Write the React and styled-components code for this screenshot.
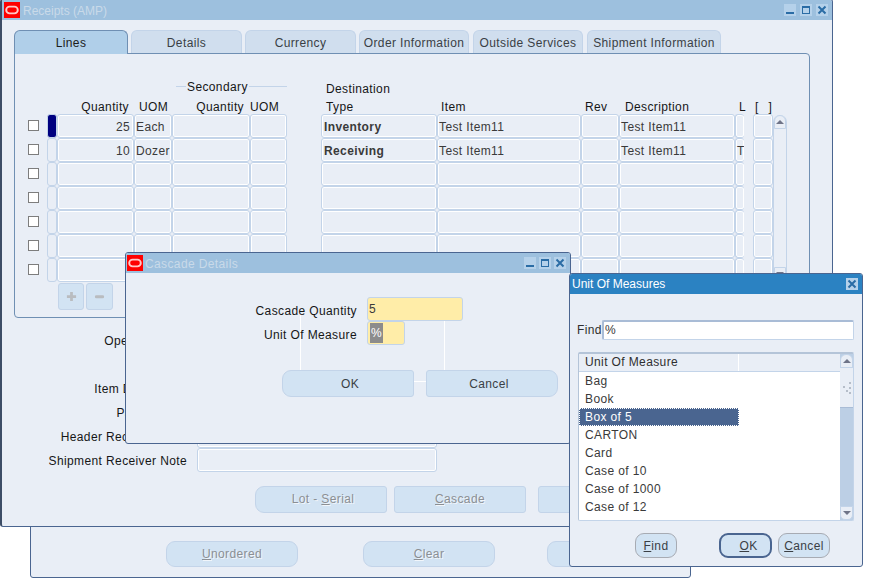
import styled, { createGlobalStyle } from 'styled-components';

const GlobalStyle = createGlobalStyle`
    html, body {
        margin: 0;
        height: 100%;
        background: #ffffff;
        overflow: hidden;
    }
    body {
        font-family: "Liberation Sans", Arial, sans-serif;
        font-size: 12px;
        letter-spacing: 0.38px;
        color: #2f2f2f;
    }
`;

const Desktop = styled.div`
    position: relative;
    width: 869px;
    height: 578px;
    overflow: hidden;
`;

// windows sit on a free canvas, so these are the only placed parts
const Window = styled.section`
    position: absolute;
    left: ${(p) => p.$left}px;
    top: ${(p) => p.$top}px;
    width: ${(p) => p.$width}px;
    height: ${(p) => p.$height}px;
    box-sizing: border-box;
    background: #e9eef6;
    border: 1px solid #4a6590;
    ${(p) => p.$edge && `border-left: ${p.$edge}px solid #3d4d66;`}
    border-radius: 3px;
    display: flex;
    flex-direction: column;
    overflow: hidden;
`;

const TitleBar = styled.header`
    flex: none;
    height: 20px;
    display: flex;
    align-items: center;
    padding: 0 3px 0 ${(p) => p.$left || 2}px;
    background: ${(p) => (p.$active ? '#2b82c2' : '#9dc0de')};
    color: ${(p) => (p.$active ? '#ffffff' : '#c9dae9')};
`;

const TitleText = styled.span`
    flex: 1;
    margin-left: ${(p) => p.$gap || 0}px;
    padding-top: ${(p) => (p.$gap ? 2 : 0)}px;
    letter-spacing: ${(p) => (p.$tight ? '0' : 'inherit')};
    white-space: nowrap;
`;

const LogoBox = styled.svg`
    flex: none;
    width: 16px;
    height: 16px;
    display: block;
`;

const Controls = styled.div`
    display: flex;
    gap: ${(p) => p.$gap || 4}px;
    margin-right: ${(p) => p.$right || 0}px;
`;

const ControlButton = styled.svg`
    display: block;
    width: 12px;
    height: 12px;
    background: #b5d1ea;
`;

const Logo = () => (
    <LogoBox viewBox="0 0 16 16">
        <rect width="16" height="16" fill="#ff0000" />
        <rect x="2.2" y="4.6" width="11.6" height="6.8" rx="3.4" fill="none" stroke="#ffc8c8" strokeWidth="1.9" />
    </LogoBox>
);

const MinIcon = () => (
    <ControlButton viewBox="0 0 12 12">
        <rect x="2" y="8" width="8" height="2" fill="#2a6ca5" />
    </ControlButton>
);

const MaxIcon = () => (
    <ControlButton viewBox="0 0 12 12">
        <rect x="2.5" y="2.5" width="7" height="7" fill="none" stroke="#2a6ca5" />
        <rect x="2" y="2" width="8" height="2" fill="#2a6ca5" />
    </ControlButton>
);

const CloseIcon = () => (
    <ControlButton viewBox="0 0 12 12">
        <path d="M2.5 2.5 L9.5 9.5 M9.5 2.5 L2.5 9.5" stroke="#2a6ca5" strokeWidth="2" />
    </ControlButton>
);

const MainBody = styled.div`
    flex: 1;
    padding: 10px 0 0 12px;
`;

const TabRow = styled.div`
    display: flex;
    height: 23px;
    align-items: flex-start;
`;

const Tab = styled.div`
    box-sizing: border-box;
    flex: none;
    width: ${(p) => p.$width}px;
    margin-left: ${(p) => p.$gap || 0}px;
    height: ${(p) => (p.$active ? 24 : 23)}px;
    display: flex;
    align-items: center;
    justify-content: center;
    padding-top: ${(p) => (p.$active ? 0 : 1)}px;
    border: 1px solid ${(p) => (p.$active ? '#6f8fb3' : '#c3d4e9')};
    border-bottom: none;
    border-radius: 6px 6px 0 0;
    background: ${(p) => (p.$active ? '#b0cfe9' : '#d0deee')};
    color: ${(p) => (p.$active ? '#1c1c1c' : '#3a3f45')};
    white-space: nowrap;
    ${(p) => p.$active && 'position: relative; z-index: 1;'}
`;

const Panel = styled.div`
    box-sizing: border-box;
    width: 796px;
    height: 265px;
    border: 1px solid #6f8fb3;
    border-radius: 0 4px 4px 4px;
    padding: 26px 0 0 13px;
`;

const LinesGrid = styled.div`
    display: grid;
    grid-template-columns: 19px 10px 77px 38px 78px 37px 34px 116px 144px 38px 116px 9px 9px 20px 14px;
    grid-template-rows: 18px 16px repeat(7, 24px);
`;

const HeadLabel = styled.div`
    grid-column: ${(p) => p.$column};
    grid-row: ${(p) => p.$row};
    padding: ${(p) => (p.$right ? `0 ${p.$pad}px 0 0` : `0 0 0 ${p.$pad}px`)};
    text-align: ${(p) => (p.$right ? 'right' : 'left')};
    word-spacing: ${(p) => p.$words || 0}px;
    line-height: 18px;
    color: #161616;
    white-space: nowrap;
`;

const GroupLabel = styled.div`
    grid-column: 5 / 7;
    grid-row: 1;
    display: flex;
    align-items: flex-start;
    gap: 1px;
    padding-left: 4px;
    line-height: 15px;
    color: #161616;
`;

const GroupLine = styled.span`
    flex: ${(p) => (p.$fill ? 1 : 'none')};
    width: 10px;
    height: 1px;
    margin-top: 6px;
    background: #c3d4e9;
`;

const CheckCell = styled.div`
    display: flex;
    align-items: center;
    grid-column: 1;
    grid-row: ${(p) => p.$row};
`;

const CheckBox = styled.span`
    box-sizing: border-box;
    width: 11px;
    height: 11px;
    margin-top: -2px;
    background: #ffffff;
    border: 1px solid #7d7d7d;
`;

const Cell = styled.div`
    grid-column: ${(p) => p.$column};
    grid-row: ${(p) => p.$row};
    box-sizing: border-box;
    height: 24px;
    min-width: 0;
    padding: 0 ${(p) => (p.$right ? 3 : 1)}px 0 ${(p) => (p.$bold ? 2 : 1)}px;
    border: 1px solid #c3d4e9;
    ${(p) => p.$clip && 'border-right: none;'}
    border-radius: 3px;
    box-shadow: inset 0 0 0 1px #ffffff;
    background: #e9eef6;
    line-height: 24px;
    text-align: ${(p) => (p.$right ? 'right' : 'left')};
    font-weight: ${(p) => (p.$bold ? 700 : 400)};
    color: #3a3a3a;
    white-space: nowrap;
    overflow: hidden;
`;

const Indicator = styled.div`
    grid-column: 2;
    grid-row: ${(p) => p.$row};
    box-sizing: border-box;
    height: 24px;
    border: 1px solid #c3d4e9;
    border-radius: 3px;
    background: ${(p) => (p.$current ? '#000080' : '#e9eef6')};
`;

const Scrollbar = styled.div`
    display: flex;
    flex-direction: column;
    justify-content: space-between;
    box-sizing: border-box;
    width: ${(p) => p.$width}px;
    background: ${(p) => p.$track};
    ${(p) => p.$span && 'grid-column: 15; grid-row: 3 / span 7;'}
    ${(p) => p.$span && 'margin-top: 1px; border: 1px solid #c3d4e9; border-top: none; border-radius: 7px 7px 0 0;'}
`;

const ScrollButton = styled.div`
    box-sizing: border-box;
    height: 14px;
    display: flex;
    align-items: center;
    justify-content: center;
    background: #e9eef6;
    border: 1px solid #c3d4e9;
    border-radius: ${(p) => (p.$down ? '0 0 5px 5px' : '6px 6px 0 0')};
`;

const Arrow = styled.span`
    width: 0;
    height: 0;
    border-left: 4px solid transparent;
    border-right: 4px solid transparent;
    ${(p) => (p.$down ? 'border-top' : 'border-bottom')}: 4px solid #6f7488;
`;

const RowTools = styled.div`
    display: flex;
    gap: 2px;
    margin: 1px 0 0 30px;
`;

const ToolButton = styled.button`
    box-sizing: border-box;
    width: ${(p) => p.$width}px;
    height: 27px;
    padding: 0;
    display: flex;
    align-items: center;
    justify-content: center;
    background: #d2e3f3;
    border: 1px solid #c3d4e9;
    border-radius: 3px;
`;

const GrayIcon = styled.svg`
    width: 11px;
    height: 11px;
`;

const FormRows = styled.div`
    margin-top: 10px;
`;

const FormRow = styled.div`
    display: flex;
    height: 24px;
    align-items: center;
`;

const FormLabel = styled.label`
    box-sizing: border-box;
    width: ${(p) => p.$width}px;
    margin-right: 10px;
    padding-top: ${(p) => p.$drop}px;
    text-align: right;
    color: #161616;
    white-space: nowrap;
`;

const FormField = styled.div`
    box-sizing: border-box;
    width: 240px;
    height: 24px;
    border: 1px solid #c3d4e9;
    border-radius: 3px;
    box-shadow: inset 0 0 0 1px #ffffff;
    background: #e9eef6;
`;

const ButtonRow = styled.div`
    display: flex;
    margin: ${(p) => p.$top}px 0 0 ${(p) => p.$left}px;
`;

const ActionButton = styled.button`
    box-sizing: border-box;
    flex: none;
    width: 132px;
    height: ${(p) => p.$height || 27}px;
    margin-left: ${(p) => p.$gap || 0}px;
    padding: 0 ${(p) => p.$padRight || 0}px ${(p) => (p.$disabled ? 1 : 0)}px ${(p) => p.$padLeft || 0}px;
    background: #d2e3f3;
    border: 1px solid #c3d4e9;
    border-radius: ${(p) => p.$radius || '3px'};
    font: inherit;
    letter-spacing: inherit;
    color: ${(p) => (p.$disabled ? '#8b8f94' : '#3a3f45')};
    text-shadow: ${(p) => (p.$disabled ? '1px 1px 0 #f1f6fb' : 'none')};
`;

const DialogBody = styled.div`
    position: relative;
    z-index: 0;
    flex: 1;
    padding-top: 24px;
`;

const DialogField = styled.div`
    box-sizing: border-box;
    width: ${(p) => p.$width}px;
    height: 24px;
    padding-left: 1px;
    background: #ffeda8;
    border: 1px solid #c3d4e9;
    border-radius: 3px;
    line-height: 22px;
    color: #3a3a3a;
`;

const Selected = styled.span`
    display: inline-block;
    height: 20px;
    margin: 1px 0 0 1px;
    padding: 0 1px;
    vertical-align: top;
    line-height: 20px;
    background: #8c8c8c;
    color: #ffffff;
`;

// stray repaint lines left over in the dialog, behind its text
const Trace = styled.span`
    position: absolute;
    z-index: -1;
    left: ${(p) => p.$left}px;
    top: ${(p) => p.$top}px;
    width: ${(p) => p.$width}px;
    height: ${(p) => p.$height}px;
    background: #ffffff;
`;

const FindRow = styled.div`
    display: flex;
    align-items: center;
    margin: 26px 0 0 7px;
`;

const FindLabel = styled.label`
    width: 25px;
    color: #2f2f2f;
`;

const FindInput = styled.div`
    box-sizing: border-box;
    width: 252px;
    height: 20px;
    padding-left: 1px;
    background: #ffffff;
    border: 1px solid #c3d4e9;
    border-left: 2px solid #a9bcd6;
    border-top: 2px solid #a9bcd6;
    border-radius: 2px;
    line-height: 16px;
    color: #3a3a3a;
`;

const ListFrame = styled.div`
    box-sizing: border-box;
    display: flex;
    width: 276px;
    height: 169px;
    margin: 12px 0 0 8px;
    background: #ffffff;
    border: 1px solid #c3d4e9;
    border-top: 2px solid #b4c4d8;
    border-left: 1px solid #b4c4d8;
    border-radius: 2px;
`;

const ListColumn = styled.div`
    flex: 1;
    min-width: 0;
`;

const ListHead = styled.div`
    display: flex;
    height: 17px;
    background: #e9eef6;
    border-bottom: 1px solid #c3d4e9;
`;

const ListHeadCell = styled.div`
    box-sizing: border-box;
    width: ${(p) => p.$width}px;
    padding-left: 6px;
    border-right: 1px solid #ffffff;
    line-height: 17px;
`;

const ListItem = styled.div`
    box-sizing: border-box;
    width: 160px;
    height: 18px;
    padding-left: 6px;
    line-height: 18px;
    color: #3a3a3a;
    ${(p) =>
        p.$selected &&
        `
        padding-left: 5px;
        line-height: 16px;
        background: #4a6590;
        color: #ffffff;
        border: 1px dotted #ffffff;
    `}
`;

const Thumb = styled.div`
    box-sizing: border-box;
    height: 40px;
    display: flex;
    align-items: center;
    justify-content: center;
    background: #e9eef6;
    border-bottom: 1px solid #a9bcd6;
`;

const ScrollTop = styled.div`
    display: flex;
    flex-direction: column;
`;

const LovButton = styled.button`
    box-sizing: border-box;
    flex: none;
    width: ${(p) => p.$width}px;
    height: 25px;
    margin-left: ${(p) => p.$gap || 0}px;
    padding: 0 0 0 ${(p) => p.$padLeft || 0}px;
    background: #d2e3f3;
    border: ${(p) => (p.$default ? '2px solid #4a6590' : '1px solid #a7abb3')};
    border-radius: 9px;
    font: inherit;
    letter-spacing: inherit;
    color: #3a3f45;
`;

const Key = styled.span`
    text-decoration: underline;
`;

const columns = [
    { column: 3, right: true, key: 'qty' },
    { column: 4, key: 'uom' },
    { column: 5, key: 'a' },
    { column: 6, key: 'b' },
    { column: 8, bold: true, key: 'type' },
    { column: 9, key: 'item' },
    { column: 10, key: 'c' },
    { column: 11, key: 'desc' },
    { column: 12, clip: true, key: 'loc' },
    { column: 14, key: 'd' },
];

const lines = [
    { qty: '25', uom: 'Each', type: 'Inventory', item: 'Test Item11', desc: 'Test Item11' },
    { qty: '10', uom: 'Dozer', type: 'Receiving', item: 'Test Item11', desc: 'Test Item11', loc: 'T' },
    {},
    {},
    {},
    {},
    {},
];

const tabs = [
    { label: 'Lines', width: 114, active: true },
    { label: 'Details', width: 111, gap: 3 },
    { label: 'Currency', width: 111, gap: 3 },
    { label: 'Order Information', width: 110, gap: 3 },
    { label: 'Outside Services', width: 110, gap: 4 },
    { label: 'Shipment Information', width: 134, gap: 4 },
];

const formLabels = ['Operating Unit', '', 'Item Description', 'Packing Slip', 'Header Receiver Note', 'Shipment Receiver Note'];

const uoms = ['Bag', 'Book', 'Box of 5', 'CARTON', 'Card', 'Case of 10', 'Case of 1000', 'Case of 12'];

const Line = ({ line, current, row }) => (
    <>
        <CheckCell $row={row}><CheckBox /></CheckCell>
        <Indicator $row={row} $current={current} />
        {columns.map((c) => (
            <Cell key={c.key} $column={c.column} $row={row} $right={c.right} $bold={c.bold} $clip={c.clip}>
                {line[c.key]}
            </Cell>
        ))}
    </>
);

const LinesTable = () => (
    <LinesGrid>
        <GroupLabel>
            <GroupLine />
            Secondary
            <GroupLine $fill />
        </GroupLabel>
        <HeadLabel $column={8} $row={1} $pad={5}>Destination</HeadLabel>
        <HeadLabel $column={3} $row={2} $pad={5} $right>Quantity</HeadLabel>
        <HeadLabel $column={4} $row={2} $pad={5}>UOM</HeadLabel>
        <HeadLabel $column={5} $row={2} $pad={6} $right>Quantity</HeadLabel>
        <HeadLabel $column={6} $row={2} $pad={0}>UOM</HeadLabel>
        <HeadLabel $column={8} $row={2} $pad={5}>Type</HeadLabel>
        <HeadLabel $column={9} $row={2} $pad={4}>Item</HeadLabel>
        <HeadLabel $column={10} $row={2} $pad={4}>Rev</HeadLabel>
        <HeadLabel $column={11} $row={2} $pad={6}>Description</HeadLabel>
        <HeadLabel $column={12} $row={2} $pad={4}>L</HeadLabel>
        <HeadLabel $column={14} $row={2} $pad={2} $words={6}>[ ]</HeadLabel>
        {lines.map((line, i) => (
            <Line key={i} line={line} current={i === 0} row={i + 3} />
        ))}
        <Scrollbar $span $width={14} $track="#e9eef6">
            <ScrollButton><Arrow /></ScrollButton>
            <ScrollButton $down><Arrow $down /></ScrollButton>
        </Scrollbar>
    </LinesGrid>
);

const App = () => (
    <Desktop>
        <GlobalStyle />

        <Window $left={30} $top={500} $width={661} $height={78}>
            <ButtonRow $top={40} $left={135}>
                <ActionButton $disabled $height={26} $radius="9px"><Key>U</Key>nordered</ActionButton>
                <ActionButton $disabled $height={26} $radius="9px" $gap={65}><Key>C</Key>lear</ActionButton>
                <ActionButton $disabled $height={26} $radius="9px" $gap={52} />
            </ButtonRow>
        </Window>

        <Window $left={0} $top={-1} $width={833} $height={528} $edge={2}>
            <TitleBar>
                <Logo />
                <TitleText $gap={3} $tight>Receipts (AMP)</TitleText>
                <Controls $right={1}>
                    <MinIcon />
                    <MaxIcon />
                    <CloseIcon />
                </Controls>
            </TitleBar>
            <MainBody>
                <TabRow>
                    {tabs.map((t) => (
                        <Tab key={t.label} $width={t.width} $gap={t.gap} $active={t.active}>{t.label}</Tab>
                    ))}
                </TabRow>
                <Panel>
                    <LinesTable />
                    <RowTools>
                        <ToolButton $width={26}>
                            <GrayIcon viewBox="0 0 12 12"><path d="M4.5 1h3v3.5H11v3H7.500V11h-3V7.500H1v-3h3.500z" fill="#b9bcc0" /></GrayIcon>
                        </ToolButton>
                        <ToolButton $width={27}>
                            <GrayIcon viewBox="0 0 12 12"><rect x="1" y="4.500" width="10" height="3.500" rx="1.500" fill="#b9bcc0" /></GrayIcon>
                        </ToolButton>
                    </RowTools>
                </Panel>
                <FormRows>
                    {formLabels.map((label, i) => (
                        <FormRow key={i}>
                            <FormLabel $width={173} $drop={2}>{label}</FormLabel>
                            <FormField />
                        </FormRow>
                    ))}
                </FormRows>
                <ButtonRow $top={14} $left={241}>
                    <ActionButton $disabled $padLeft={4} $radius="9px 3px 3px 9px">Lot - <Key>S</Key>erial</ActionButton>
                    <ActionButton $disabled $gap={7}><Key>C</Key>ascade</ActionButton>
                    <ActionButton $disabled $gap={12} />
                </ButtonRow>
            </MainBody>
        </Window>

        <Window $left={125} $top={252} $width={446} $height={192}>
            <TitleBar $left={1}>
                <Logo />
                <TitleText $gap={2}>Cascade Details</TitleText>
                <Controls $right={1} $gap={3}>
                    <MinIcon />
                    <MaxIcon />
                    <CloseIcon />
                </Controls>
            </TitleBar>
            <DialogBody>
                <Trace $left={174} $top={35} $width={1} $height={62} />
                <Trace $left={318} $top={47} $width={1} $height={50} />
                <Trace $left={288} $top={108} $width={12} $height={1} />
                <FormRow>
                    <FormLabel $width={231} $drop={4}>Cascade Quantity</FormLabel>
                    <DialogField $width={96}>5</DialogField>
                </FormRow>
                <FormRow>
                    <FormLabel $width={231} $drop={4}>Unit Of Measure</FormLabel>
                    <DialogField $width={38}><Selected>%</Selected></DialogField>
                </FormRow>
                <ButtonRow $top={25} $left={156}>
                    <ActionButton $padLeft={4} $radius="9px 3px 3px 9px">OK</ActionButton>
                    <ActionButton $gap={12} $padRight={6} $radius="3px 9px 9px 3px">Cancel</ActionButton>
                </ButtonRow>
            </DialogBody>
        </Window>

        <Window $left={569} $top={273} $width={294} $height={294}>
            <TitleBar $active>
                <TitleText $tight>Unit Of Measures</TitleText>
                <Controls $right={1}>
                    <CloseIcon />
                </Controls>
            </TitleBar>
            <FindRow>
                <FindLabel>Find</FindLabel>
                <FindInput>%</FindInput>
            </FindRow>
            <ListFrame>
                <ListColumn>
                    <ListHead>
                        <ListHeadCell $width={160}>Unit Of Measure</ListHeadCell>
                    </ListHead>
                    {uoms.map((u) => (
                        <ListItem key={u} $selected={u === 'Box of 5'}>{u}</ListItem>
                    ))}
                </ListColumn>
                <Scrollbar $width={13} $track="#bccfe5">
                    <ScrollTop>
                        <ScrollButton><Arrow /></ScrollButton>
                        <Thumb>
                            <svg width="9" height="12" viewBox="0 0 9 12">
                                <path d="M7 0h2v2H7zM1 4h2v2H1zM7 5h2v2H7zM4 8h2v2H4zM7 10h2v2H7z" fill="#b5bdc9" />
                            </svg>
                        </Thumb>
                    </ScrollTop>
                    <ScrollButton $down><Arrow $down /></ScrollButton>
                </Scrollbar>
            </ListFrame>
            <ButtonRow $top={12} $left={65}>
                <LovButton $width={42}><Key>F</Key>ind</LovButton>
                <LovButton $width={53} $gap={42} $padLeft={6} $default><Key>O</Key>K</LovButton>
                <LovButton $width={52} $gap={6}><Key>C</Key>ancel</LovButton>
            </ButtonRow>
        </Window>
    </Desktop>
);

export default App;
